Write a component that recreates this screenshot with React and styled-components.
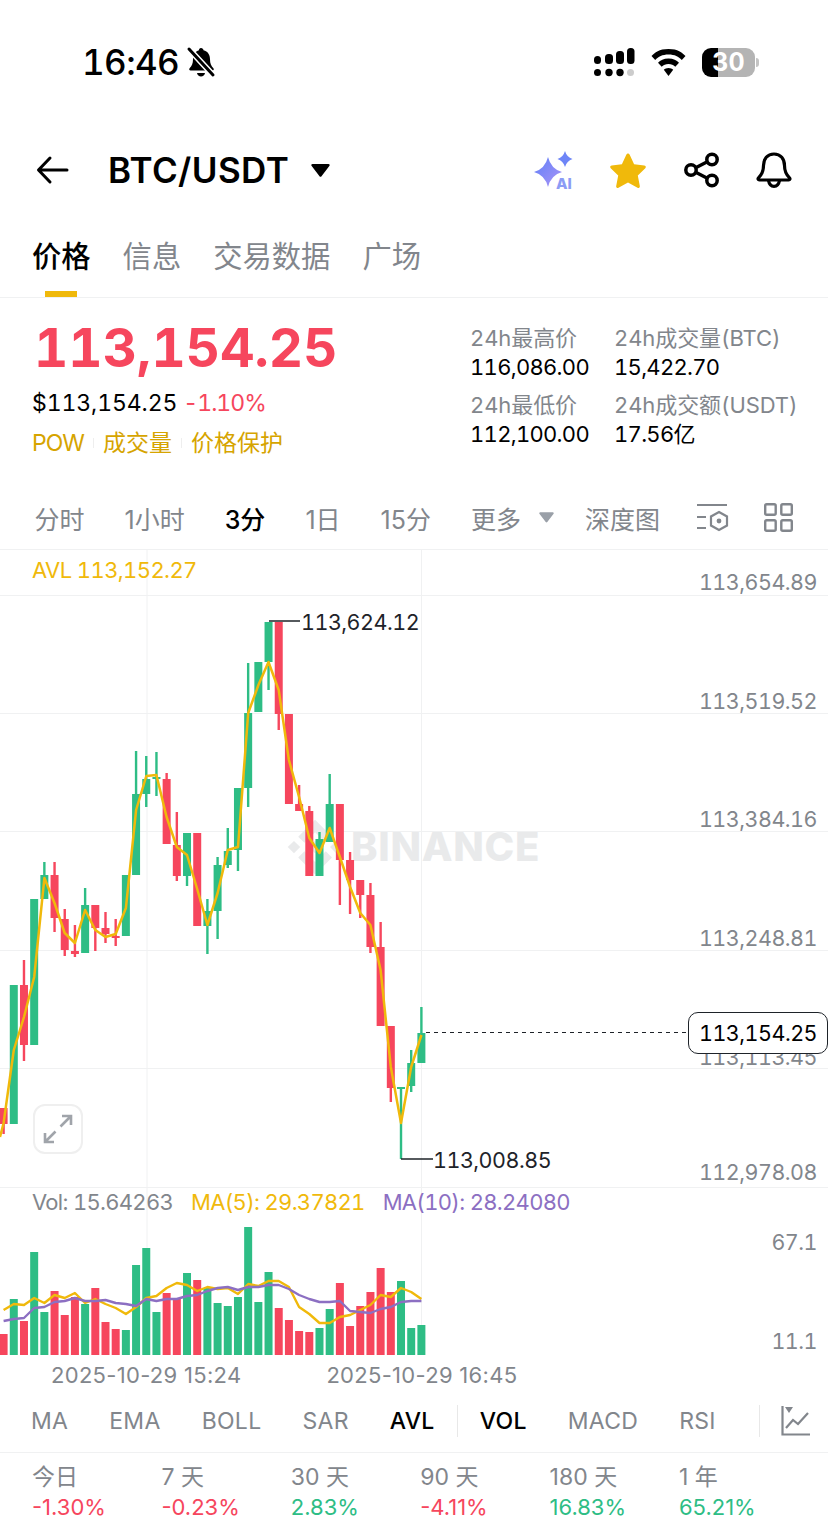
import React from 'react';
import styled, { createGlobalStyle } from 'styled-components';

const RED = '#F6465D';
const GREEN = '#2EBD85';
const GOLD = '#F0B90B';
const PURPLE = '#8C6FC2';
const GREY = '#82868C';
const LINE = '#F0F1F2';

const GlobalStyles = createGlobalStyle`
  html, body {
    margin: 0;
    padding: 0;
    background: #fff;
  }
  body {
    font-family: Inter, "Noto Sans CJK SC", sans-serif;
    font-variant-numeric: tabular-nums;
    color: #000;
  }
`;

const Page = styled.div`
  width: 828px;
  height: 1526px;
  overflow: hidden;
  background: #fff;
`;

const StatusBar = styled.div`
  height: 124px;
  display: flex;
  align-items: center;
  justify-content: space-between;
  padding: 0 73px 0 82px;
  box-sizing: border-box;
`;

const StatusGroup = styled.div`
  display: flex;
  align-items: center;
  gap: ${p => p.$gap}px;
`;

const Time = styled.span`
  font-size: 35px;
  font-weight: 500;
  letter-spacing: -0.6px;
`;

const Battery = styled.div`
  width: 53px;
  height: 29px;
  border-radius: 9px;
  background: linear-gradient(90deg, #000 30%, #b4b4b4 30%);
  color: #fff;
  font-size: 25px;
  font-weight: 700;
  line-height: 29px;
  text-align: center;
  position: relative;
  &::after {
    content: '';
    position: absolute;
    right: -4px;
    top: 10px;
    width: 3px;
    height: 9px;
    border-radius: 0 3px 3px 0;
    background: #c4c4c4;
  }
`;

const NavBar = styled.div`
  height: 92px;
  display: flex;
  align-items: center;
  padding: 0 36px;
  box-sizing: border-box;
`;

const Pair = styled.h1`
  margin: 0 22px 0 39px;
  font-size: 35px;
  font-weight: 600;
  letter-spacing: 0.4px;
`;

const NavIcons = styled.div`
  margin-left: auto;
  display: flex;
  align-items: center;
  gap: 36px;
`;

const StarSlot = styled.div`
  display: flex;
  margin-right: 2px;
`;

const Tabs = styled.div`
  height: 81px;
  display: flex;
  gap: 32px;
  padding-left: 32px;
  border-bottom: 1px solid ${LINE};
  box-sizing: content-box;
`;

const Tab = styled.div`
  position: relative;
  font-size: 29.3px;
  line-height: 81px;
  font-weight: ${p => (p.$active ? 500 : 400)};
  color: ${p => (p.$active ? '#000' : GREY)};
  &::after {
    content: '';
    display: ${p => (p.$active ? 'block' : 'none')};
    position: absolute;
    left: 13px;
    bottom: 0;
    width: 32px;
    height: 6px;
    background: ${GOLD};
  }
`;

const Summary = styled.div`
  height: 182px;
  display: grid;
  grid-template-columns: 438px auto;
  padding-left: 32px;
  box-sizing: border-box;
`;

const BigPrice = styled.div`
  margin-top: 20px;
  font-size: 53px;
  line-height: 60px;
  font-weight: 700;
  color: ${RED};
  padding-left: 2px;
  letter-spacing: 0.1px;
`;

const SubRow = styled.div`
  margin-top: 10px;
  display: flex;
  gap: 6px;
  font-size: 23px;
  line-height: 30px;
  letter-spacing: -0.1px;
`;

const Change = styled.span`
  color: ${RED};
  letter-spacing: -1px;
`;

const TagRow = styled.div`
  margin-top: 10px;
  display: flex;
  align-items: center;
  font-size: 23px;
  line-height: 30px;
  color: #D6A400;
`;

const TagName = styled.span`
  letter-spacing: -1px;
`;

const TagDivider = styled.i`
  width: 1px;
  height: 10px;
  margin: 0 ${p => p.$gap}px;
  background: #eee;
`;

const Stats = styled.div`
  padding-top: 26px;
  display: grid;
  grid-template-columns: 144px auto;
  grid-auto-rows: 58px;
  row-gap: 9px;
`;

const Stat = styled.div`
  font-size: 22px;
  line-height: 29px;
`;

const StatLabel = styled.div`
  color: ${GREY};
  letter-spacing: -0.1px;
`;

const StatValue = styled.div`
  letter-spacing: -0.7px;
`;

const Intervals = styled.div`
  height: 70px;
  padding: 6px 0 0 34.5px;
  display: flex;
  align-items: center;
  gap: 40px;
  border-bottom: 1px solid ${LINE};
  box-sizing: border-box;
  font-variant-numeric: normal;
`;

const Interval = styled.span`
  font-size: 25px;
  font-weight: ${p => (p.$active ? 500 : 400)};
  color: ${p => (p.$active ? '#000' : GREY)};
`;

const MoreGroup = styled.div`
  display: flex;
  align-items: center;
  gap: 18px;
  margin-right: -9px;
`;

const IntervalIcons = styled.div`
  display: flex;
  align-items: center;
  gap: 35px;
  margin-left: -4px;
`;

const Chart = styled.div`
  position: relative;
  height: 805px;
  svg.plot {
    display: block;
  }
`;

const AvlLegend = styled.div`
  position: absolute;
  left: 32px;
  top: 5px;
  font-size: 22px;
  line-height: 30px;
  letter-spacing: -0.6px;
  color: ${GOLD};
`;

const VolLegend = styled.div`
  position: absolute;
  left: 32px;
  top: 637px;
  display: flex;
  gap: 18px;
  font-size: 22px;
  line-height: 30px;
  letter-spacing: -0.7px;
`;

const LegendItem = styled.span`
  color: ${p => p.$color};
`;

const ExpandButton = styled.div`
  position: absolute;
  left: 33px;
  top: 554px;
  width: 50px;
  height: 50px;
  border: 2px solid #efefef;
  border-radius: 12px;
  box-sizing: border-box;
  background: #fff;
  display: flex;
  align-items: center;
  justify-content: center;
`;

const PriceTag = styled.div`
  position: absolute;
  right: 0;
  top: 462px;
  width: 140px;
  height: 42px;
  border: 1.5px solid #1e2329;
  border-radius: 10px;
  background: #fff;
  box-sizing: border-box;
  font-size: 21.5px;
  letter-spacing: -0.5px;
  line-height: 40px;
  text-align: center;
`;

const DateAxis = styled.div`
  height: 40px;
  display: flex;
  align-items: center;
  gap: 85px;
  padding-left: 51px;
  font-size: 22px;
  font-variant-numeric: normal;
  letter-spacing: 0.3px;
  color: ${GREY};
`;

const Indicators = styled.div`
  height: 58px;
  padding: 0 0 6px 31px;
  display: flex;
  align-items: center;
  gap: 41px;
  border-bottom: 1px solid ${LINE};
  box-sizing: border-box;
  overflow: hidden;
`;

const Indicator = styled.span`
  font-size: 23px;
  letter-spacing: 0.3px;
  font-weight: ${p => (p.$active ? 500 : 400)};
  color: ${p => (p.$active ? '#000' : GREY)};
`;

const IndicatorDivider = styled.i`
  width: 1px;
  height: 32px;
  flex: none;
  background: #e8e8e8;
  margin: ${p => p.$margin};
`;

const Periods = styled.div`
  padding: 9px 0 0 32px;
  display: grid;
  grid-template-columns: repeat(6, 129.4px);
  font-variant-numeric: normal;
`;

const Period = styled.div`
  line-height: 30px;
`;

const PeriodLabel = styled.div`
  font-size: 23px;
  color: ${GREY};
`;

const PeriodValue = styled.div`
  font-size: 22px;
  color: ${p => (p.$up ? GREEN : RED)};
`;

const AiSvg = styled.svg`
  margin-right: -4px;
`;

const IndicatorIconSvg = styled.svg`
  flex: none;
  margin-left: -20px;
`;

// [bodyTop, bodyBottom, wickTop, wickBottom, up]
const candles = [
  [1108, 1124, 1108, 1134, 0], [985, 1124, 985, 1124, 1], [985, 1045, 960, 1061, 0], [899, 1045, 899, 1045, 1],
  [875, 899, 862, 899, 1], [875, 918, 862, 932, 0], [919, 950, 909, 956, 0], [951, 954, 925, 957, 0],
  [905, 953, 888, 953, 1], [905, 928, 905, 951, 0], [928, 934, 912, 943, 0], [936, 938, 919, 946, 0],
  [875, 936, 875, 936, 1], [794, 875, 751, 875, 1], [779, 794, 756, 807, 1], [777, 779, 752, 796, 1],
  [779, 844, 773, 844, 0], [845, 876, 812, 881, 0], [833, 876, 833, 886, 1], [833, 926, 833, 926, 0],
  [911, 926, 899, 954, 1], [865, 911, 857, 939, 1], [851, 865, 828, 868, 1], [788, 850, 788, 871, 1],
  [713, 788, 663, 807, 1], [662, 712, 662, 712, 1], [622, 662, 622, 690, 1], [622, 714, 622, 730, 0],
  [714, 804, 714, 804, 0], [804, 811, 785, 811, 0], [811, 876, 806, 876, 0], [839, 876, 832, 876, 1],
  [804, 842, 774, 842, 1], [804, 860, 804, 905, 0], [860, 880, 852, 914, 0], [880, 895, 880, 918, 0],
  [895, 947, 883, 953, 0], [947, 1026, 922, 1026, 0], [1026, 1088, 1026, 1102, 0], [1087, 1089, 1087, 1159, 1],
  [1063, 1086, 1050, 1092, 1], [1033, 1063, 1007, 1063, 1],
];

const candleX = i => 3.6 + 10.19 * i;

const avl = [
  1123, 1050, 1017, 977, 878, 903, 933, 943, 910, 930, 937, 934, 908, 810, 776, 775, 817, 847, 855, 889, 925,
  893, 850, 847, 713, 685, 662, 690, 760, 797, 838, 853, 828, 857, 887, 913, 925, 970, 1067, 1123, 1067, 1035,
];

const volumes = [
  1334, 1299, 1321, 1252, 1312, 1291, 1315, 1297, 1304, 1288, 1322, 1329, 1330, 1265, 1248, 1312, 1293, 1299, 1273,
  1280, 1288, 1303, 1306, 1297, 1227, 1302, 1272, 1308, 1320, 1331, 1332, 1328, 1309, 1283, 1326, 1306, 1292, 1268,
  1292, 1281, 1328, 1325,
];

const ma5 = [
  1310, 1304, 1305, 1298, 1303, 1295, 1298, 1293, 1303, 1299, 1304, 1308, 1314, 1307, 1298, 1296, 1288, 1283, 1285,
  1291, 1287, 1289, 1288, 1294, 1284, 1286, 1281, 1281, 1287, 1307, 1314, 1323, 1323, 1317, 1315, 1310, 1305, 1295,
  1297, 1288, 1292, 1299,
];

const ma10 = [
  1321, 1319, 1318, 1308, 1307, 1302, 1301, 1298, 1301, 1301, 1300, 1303, 1304, 1306, 1299, 1301, 1299, 1299, 1296,
  1295, 1291, 1288, 1287, 1290, 1287, 1287, 1285, 1285, 1289, 1295, 1299, 1302, 1302, 1301, 1311, 1312, 1313, 1309,
  1307, 1302, 1301, 1301,
];

const toPoints = ys => ys.map((y, i) => `${candleX(i).toFixed(1)},${y}`).join(' ');

const gridLines = [595, 713, 831, 950, 1068, 1187, 1355];
const axisPrices = [
  ['113,654.89', 590], ['113,519.52', 709], ['113,384.16', 827], ['113,248.81', 946], ['113,113.45', 1065], ['112,978.08', 1180],
];

const PriceChart = () => (
  <svg className="plot" width="828" height="805" viewBox="0 550 828 805" fontFamily="Inter, sans-serif" fontSize="21.5" letterSpacing="-0.5">
    {gridLines.map(y => (
      <line key={y} x1="0" x2="828" y1={y + 0.5} y2={y + 0.5} stroke={LINE} strokeWidth="1" />
    ))}
    <line x1="147" x2="147" y1="550" y2="1355" stroke={LINE} />
    <line x1="421.5" x2="421.5" y1="550" y2="1355" stroke={LINE} />

    <g fill="#E9EAEB">
      <g transform="translate(288 820) scale(0.43)">
        <path d="M38.2 53.1L63 28.3l24.8 24.8 14.4-14.4L63-.5 23.8 38.7zM-.5 63l14.4-14.4L28.3 63 13.9 77.4zM38.2 72.9L63 97.7l24.8-24.8 14.4 14.4L63 126.5 23.8 87.3zM97.7 63l14.4-14.4L126.5 63l-14.4 14.4zM77.6 63L63 48.4 48.4 63 63 77.6z" />
      </g>
      <text x="351" y="861" fontSize="40" fontWeight="800" letterSpacing="0.7">BINANCE</text>
    </g>

    {axisPrices.map(([label, y]) => (
      <text key={label} x="817" y={y} textAnchor="end" fill={GREY}>{label}</text>
    ))}
    <text x="817" y="1250" textAnchor="end" fill={GREY}>67.1</text>
    <text x="817" y="1349" textAnchor="end" fill={GREY}>11.1</text>

    {candles.map(([top, bottom, wickTop, wickBottom, up], i) => {
      const x = candleX(i);
      const color = up ? GREEN : RED;
      return (
        <g key={i} fill={color}>
          <rect x={x - 1.2} y={wickTop} width="2.4" height={wickBottom - wickTop} />
          <rect x={x - 4} y={top} width="8" height={bottom - top} />
        </g>
      );
    })}
    <polyline points={`0,1137 ${toPoints(avl)}`} fill="none" stroke={GOLD} strokeWidth="2.5" strokeLinejoin="round" />

    <line x1="269" x2="300" y1="621" y2="621" stroke="#1e2329" strokeWidth="1.5" />
    <text x="301" y="630" fill="#1e2329">113,624.12</text>
    <line x1="401" x2="433" y1="1159" y2="1159" stroke="#1e2329" strokeWidth="1.5" />
    <text x="433" y="1168" fill="#1e2329">113,008.85</text>
    <line x1="426" x2="688" y1="1032.5" y2="1032.5" stroke="#1e2329" strokeWidth="1.2" strokeDasharray="4 4" />

    {volumes.map((top, i) => (
      <rect key={i} x={candleX(i) - 4} y={top} width="8" height={1355 - top} fill={candles[i][4] ? GREEN : RED} />
    ))}
    <polyline points={toPoints(ma5)} fill="none" stroke={GOLD} strokeWidth="2.4" strokeLinejoin="round" />
    <polyline points={toPoints(ma10)} fill="none" stroke={PURPLE} strokeWidth="2.4" strokeLinejoin="round" />
  </svg>
);

const SilentBell = () => (
  <svg width="30" height="32" viewBox="0 0 30 32">
    <path d="M15 2c1.500 0 2.300 1 2.500 2.200 4.300 1 6.500 4.400 6.500 9 0 4.500 1.200 6.800 3.400 9 .8.900.3 2.300-1 2.300H4.600c-1.300 0-1.800-1.400-1-2.300 2.200-2.200 3.400-4.500 3.400-9 0-4.600 2.200-8 6-9C13 3 13.500 2 15 2z" />
    <path d="M11 27h8c-.3 2-2 3.500-4 3.500S11.300 29 11 27z" />
    <path d="M3 3l24 26" stroke="#fff" strokeWidth="6" strokeLinecap="round" />
    <path d="M3 3l24 26" stroke="#000" strokeWidth="3" strokeLinecap="round" />
  </svg>
);

const SignalIcon = () => (
  <svg width="41" height="29" viewBox="0 0 41 29">
    <rect x="0" y="8" width="7" height="8" rx="3.500" />
    <rect x="11" y="6" width="8" height="10" rx="3.500" />
    <rect x="22" y="3" width="8" height="13" rx="3.500" />
    <rect x="33" y="0" width="7.500" height="16" rx="3.500" />
    <circle cx="3.500" cy="24.500" r="3.500" />
    <circle cx="15" cy="24.500" r="3.700" />
    <circle cx="26" cy="24.500" r="3.700" />
    <circle cx="36.500" cy="24.500" r="3.500" fill="#ccc" />
  </svg>
);

const WifiIcon = () => (
  <svg width="35" height="27" viewBox="0 0 35 27">
    <path d="M17.500 0C27 0 31 3.500 34.500 7l-3.700 4c-3.300-3.300-7-5.500-13.300-5.500S7.500 7.700 4.200 11L.5 7C4 3.500 8 0 17.500 0z" />
    <path d="M17.500 9.500c5 0 8 1.800 10.500 4.300l-3.700 4c-2-1.900-3.800-2.800-6.800-2.800s-4.800.9-6.800 2.800l-3.700-4c2.500-2.500 5.500-4.300 10.500-4.300z" />
    <path d="M17.500 19c2 0 3.500.7 4.700 1.800L17.500 27l-4.700-6.200c1.200-1.100 2.700-1.800 4.700-1.800z" />
  </svg>
);

const BackIcon = () => (
  <svg width="33" height="30" viewBox="0 0 33 30" fill="none" stroke="#000" strokeWidth="3" strokeLinecap="round" strokeLinejoin="round">
    <path d="M31 15H3M14 3L2.500 15 14 27" />
  </svg>
);

const CaretIcon = ({ color = '#000', width = 19, height = 13 }) => (
  <svg width={width} height={height} viewBox="0 0 19 13">
    <path d="M1.500 0h16c1 0 1.500 1 1 1.800l-8 10.500c-.5.700-1.500.7-2 0L.5 1.800C0 1 .5 0 1.500 0z" fill={color} />
  </svg>
);

const AiIcon = () => (
  <AiSvg width="50" height="44" viewBox="-6 0 50 44">
    <defs>
      <linearGradient id="aiStar" x1="0" y1="0" x2="1" y2="1">
        <stop offset="0" stopColor="#5F80F8" />
        <stop offset="1" stopColor="#AC94F6" />
      </linearGradient>
    </defs>
    <path d="M14 9Q17 21 28 24Q17 27 14 39Q11 27 0 24Q11 21 14 9z" fill="url(#aiStar)" />
    <path d="M31 3Q32.800 9.200 38.500 11Q32.800 12.800 31 19Q29.200 12.800 23.500 11Q29.200 9.200 31 3z" fill="#6E85F7" />
    <text x="22" y="41" fontFamily="Inter, sans-serif" fontSize="15" fontWeight="800" fill="#8C9CF5">AI</text>
  </AiSvg>
);

const StarIcon = () => (
  <svg width="36" height="35" viewBox="0 0 36 35">
    <path d="M18 0.500c.8 0 1.300.4 1.700 1.200l4.400 9.600 10.200 1.300c1.500.2 2 1.600 1 2.600l-7.500 7.200 2 10.600c.3 1.500-1 2.400-2.300 1.700L18 29.400l-9.500 5.300c-1.300.7-2.600-.2-2.300-1.700l2-10.600-7.500-7.200c-1-1-.5-2.400 1-2.600l10.200-1.300 4.400-9.600c.4-.8.900-1.200 1.700-1.200z" fill={GOLD} />
  </svg>
);

const ShareIcon = () => (
  <svg width="36" height="36" viewBox="0 0 36 36" fill="none" stroke="#000" strokeWidth="3.500">
    <circle cx="28" cy="7.500" r="5.200" />
    <circle cx="7" cy="18" r="5.200" />
    <circle cx="28" cy="28.500" r="5.200" />
    <path d="M11.700 15.700l11.600-5.900M11.700 20.300l11.600 5.900" />
  </svg>
);

const BellIcon = () => (
  <svg width="36" height="37" viewBox="0 0 36 37" fill="none" stroke="#000" strokeWidth="3.200" strokeLinejoin="round" strokeLinecap="round">
    <path d="M18 2c-6.700 0-10.500 5-10.500 11.500 0 6-1.500 9-5 12.300-.9.900-.4 2.200.8 2.200h29.400c1.200 0 1.700-1.300.8-2.200-3.500-3.300-5-6.300-5-12.300C28.500 7 24.700 2 18 2z" />
    <path d="M12.500 28.500c.6 3.400 2.700 5.800 5.500 5.800s4.900-2.400 5.500-5.800" />
  </svg>
);

const DepthSettingsIcon = () => (
  <svg width="33" height="29" viewBox="0 0 33 29" fill="none" stroke={GREY} strokeWidth="2.200">
    <path d="M1 2h30M1 14h9M1 25h9" />
    <path d="M23 9l8 4.500v9L23 27l-8-4.500v-9z" />
    <circle cx="23" cy="18" r="2.400" fill={GREY} stroke="none" />
  </svg>
);

const GridIcon = () => (
  <svg width="29" height="29" viewBox="0 0 29 29" fill="none" stroke={GREY} strokeWidth="2.400">
    <rect x="1.200" y="1.200" width="10.500" height="10.500" rx="1.500" />
    <rect x="17.300" y="1.200" width="10.500" height="10.500" rx="1.500" />
    <rect x="1.200" y="17.300" width="10.500" height="10.500" rx="1.500" />
    <rect x="17.300" y="17.300" width="10.500" height="10.500" rx="1.500" />
  </svg>
);

const ExpandIcon = () => (
  <svg width="30" height="30" viewBox="0 0 30 30" fill="none" stroke="#A0A4AA" strokeWidth="2.600">
    <path d="M17.500 12.500L28 2M19 2h9v9" />
    <path d="M12.500 17.500L2 28M2 19v9h9" />
  </svg>
);

const IndicatorIcon = () => (
  <IndicatorIconSvg width="29" height="30" viewBox="0 0 29 30" fill="none" stroke={GREY} strokeWidth="2.200">
    <path d="M1.500 0v28.500H29" />
    <path d="M5 22l7-8 5 4 10-11" />
    <path d="M4 1h8l-4 6z" fill={GREY} stroke="none" />
  </IndicatorIconSvg>
);

const intervals = [
  { label: '分时' },
  { label: '1小时' },
  { label: '3分', active: true },
  { label: '1日' },
  { label: '15分' },
];

const indicatorsLeft = ['MA', 'EMA', 'BOLL', 'SAR'];
const periods = [
  { label: '今日', value: '-1.30%' },
  { label: '7 天', value: '-0.23%' },
  { label: '30 天', value: '2.83%', up: true },
  { label: '90 天', value: '-4.11%' },
  { label: '180 天', value: '16.83%', up: true },
  { label: '1 年', value: '65.21%', up: true },
];

const stats = [
  ['24h最高价', '116,086.00'],
  ['24h成交量(BTC)', '15,422.70'],
  ['24h最低价', '112,100.00'],
  ['24h成交额(USDT)', '17.56亿'],
];

const App = () => (
  <Page>
    <GlobalStyles />
    <StatusBar>
      <StatusGroup $gap={7}>
        <Time>16:46</Time>
        <SilentBell />
      </StatusGroup>
      <StatusGroup $gap={16}>
        <SignalIcon />
        <WifiIcon />
        <Battery>30</Battery>
      </StatusGroup>
    </StatusBar>

    <NavBar>
      <BackIcon />
      <Pair>BTC/USDT</Pair>
      <CaretIcon />
      <NavIcons>
        <AiIcon />
        <StarSlot>
          <StarIcon />
        </StarSlot>
        <ShareIcon />
        <BellIcon />
      </NavIcons>
    </NavBar>

    <Tabs>
      <Tab $active>价格</Tab>
      <Tab>信息</Tab>
      <Tab>交易数据</Tab>
      <Tab>广场</Tab>
    </Tabs>

    <Summary>
      <div>
        <BigPrice>113,154.25</BigPrice>
        <SubRow>
          <span>$113,154.25</span>
          <Change>-1.10%</Change>
        </SubRow>
        <TagRow>
          <TagName>POW</TagName>
          <TagDivider $gap={9} />
          <span>成交量</span>
          <TagDivider $gap={9} />
          <span>价格保护</span>
        </TagRow>
      </div>
      <Stats>
        {stats.map(([label, value]) => (
          <Stat key={label}>
            <StatLabel>{label}</StatLabel>
            <StatValue>{value}</StatValue>
          </Stat>
        ))}
      </Stats>
    </Summary>

    <Intervals>
      {intervals.map(item => (
        <Interval key={item.label} $active={item.active}>{item.label}</Interval>
      ))}
      <MoreGroup>
        <Interval>更多</Interval>
        <CaretIcon color="#9AA0A8" width={15} height={11} />
      </MoreGroup>
      <Interval>深度图</Interval>
      <IntervalIcons>
        <DepthSettingsIcon />
        <GridIcon />
      </IntervalIcons>
    </Intervals>

    <Chart>
      <PriceChart />
      <AvlLegend>AVL 113,152.27</AvlLegend>
      <VolLegend>
        <LegendItem $color={GREY}>Vol: 15.64263</LegendItem>
        <LegendItem $color={GOLD}>MA(5): 29.37821</LegendItem>
        <LegendItem $color={PURPLE}>MA(10): 28.24080</LegendItem>
      </VolLegend>
      <ExpandButton>
        <ExpandIcon />
      </ExpandButton>
      <PriceTag>113,154.25</PriceTag>
    </Chart>

    <DateAxis>
      <span>2025-10-29 15:24</span>
      <span>2025-10-29 16:45</span>
    </DateAxis>

    <Indicators>
      {indicatorsLeft.map(name => (
        <Indicator key={name}>{name}</Indicator>
      ))}
      <Indicator $active>AVL</Indicator>
      <IndicatorDivider $margin="0 -19px" />
      <Indicator $active>VOL</Indicator>
      <Indicator>MACD</Indicator>
      <Indicator>RSI</Indicator>
      <IndicatorDivider $margin="0 0 0 2px" />
      <IndicatorIcon />
    </Indicators>

    <Periods>
      {periods.map(item => (
        <Period key={item.label}>
          <PeriodLabel>{item.label}</PeriodLabel>
          <PeriodValue $up={item.up}>{item.value}</PeriodValue>
        </Period>
      ))}
    </Periods>
  </Page>
);

export default App;
